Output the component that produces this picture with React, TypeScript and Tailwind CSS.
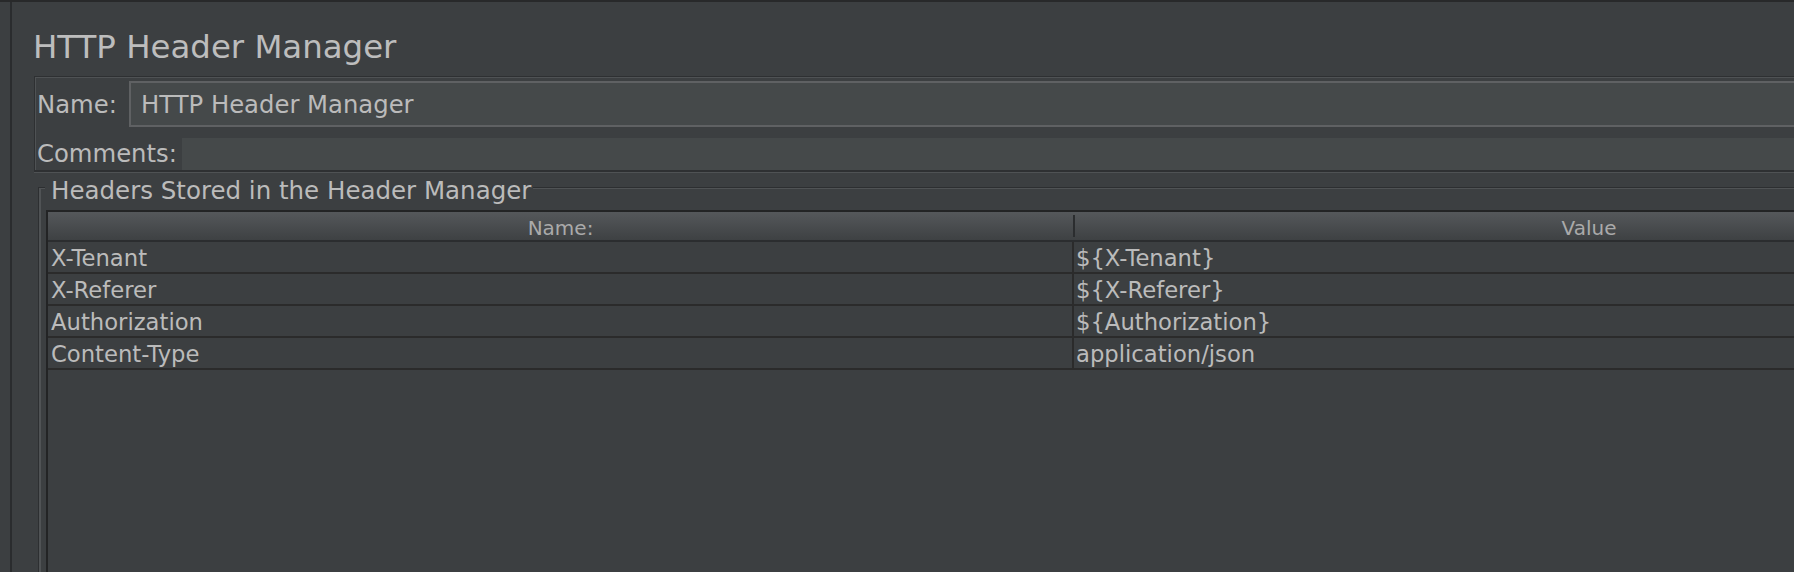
import React from "react";

const rows: [string, string][] = [
  ["X-Tenant", "${X-Tenant}"],
  ["X-Referer", "${X-Referer}"],
  ["Authorization", "${Authorization}"],
  ["Content-Type", "application/json"],
];

export default function App() {
  return (
    <div className="flex h-[572px] w-full overflow-hidden border-t-2 border-[#28292a] bg-[#3c3f41] text-[#bbbbbb] [font-family:'DejaVu_Sans',sans-serif]">
      {/* left split strip */}
      <div className="w-[10px] shrink-0" />
      <div className="w-[2px] shrink-0 bg-[#2a2c2e]" />

      <div className="min-w-0 flex-1 overflow-hidden">
        <div className="w-[2200px]">
          <h1 className="ml-[21px] mt-[25px] text-[32.4px] font-normal leading-[40px] text-[#bdbdbd]">
            HTTP Header Manager
          </h1>

          {/* Name / Comments panel */}
          <div className="ml-[22px] mt-[9px] border-b-2 border-l border-t border-[#2e3032] pt-[4px] shadow-[inset_1px_1px_0_#4f5254,0_1px_0_#4f5254]">
            <div className="flex h-[46px] items-center">
              <span className="w-[94px] shrink-0 pl-[2px] pt-[1px] text-[24.3px] leading-[28px]">Name:</span>
              <div className="h-full flex-1 border-2 border-[#5f6163] bg-[#45494a] pl-[10px] pt-[2px] text-[24.3px] leading-[40px]">
                HTTP Header Manager
              </div>
            </div>
            <div className="mt-[11px] flex h-[32px] items-center">
              <span className="w-[147px] shrink-0 pl-[2px] text-[24.3px] leading-[28px]">Comments:</span>
              <div className="h-full flex-1 bg-[#45494a]" />
            </div>
          </div>

          {/* Titled group */}
          <div className="relative ml-[26px] mt-[15px] border-l border-t border-[#2d2f31] pl-[7px] pt-[22px] shadow-[inset_2px_1px_0_#505355]">
            <span className="absolute left-[6px] top-[-11px] bg-[#3c3f41] pl-[6px] pr-[2px] text-[24.5px] leading-[28px]">
              Headers Stored in the Header Manager
            </span>

            <div className="h-[400px] w-[2056px] border-l-2 border-t-2 border-[#232425]">
              <div className="flex h-[30px] border-b-2 border-[#2b2d2f] bg-linear-to-b from-[#55585b] to-[#3e4143] text-[20px] leading-[24px] text-[#aaaaaa]">
                <div className="w-[1025px] shrink-0 pt-[4px] text-center">Name:</div>
                <div className="my-[3px] w-[3px] shrink-0 border-l-2 border-[#2b2d2f]" />
                <div className="w-[1026px] shrink-0 pt-[4px] text-center">Value</div>
              </div>
              {rows.map(([n, v]) => (
                <div key={n} className="flex h-[32px] border-b-2 border-[#2b2b2b] text-[22.7px] leading-[30px]">
                  <div className="w-[1026px] shrink-0 border-r-2 border-[#2b2b2b] pl-[3px] pt-[1px]">{n}</div>
                  <div className="flex-1 pl-[2px] pt-[1px]">{v}</div>
                </div>
              ))}
            </div>
          </div>
        </div>
      </div>
    </div>
  );
}
